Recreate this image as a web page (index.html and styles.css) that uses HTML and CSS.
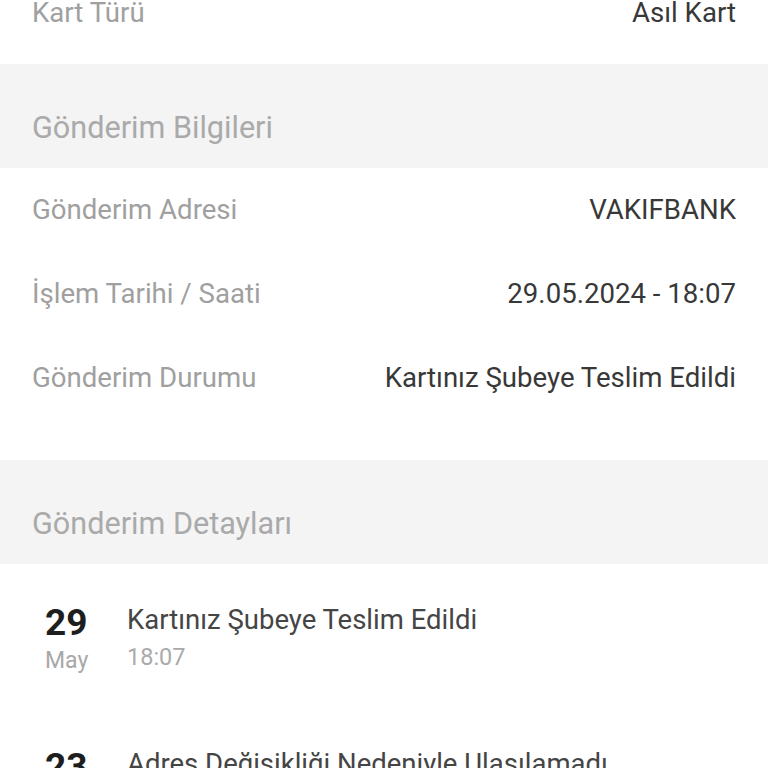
FILE: index.html
```html
<!DOCTYPE html>
<html lang="tr">
<head>
<meta charset="utf-8">
<link rel="stylesheet" href="styles.css">
</head>
<body>
<div class="page">
  <div class="row row-top">
    <span class="label">Kart Türü</span>
    <span class="value">Asıl Kart</span>
  </div>
  <div class="section">Gönderim Bilgileri</div>
  <div class="rows">
    <div class="row">
      <span class="label">Gönderim Adresi</span>
      <span class="value">VAKIFBANK</span>
    </div>
    <div class="row">
      <span class="label">İşlem Tarihi / Saati</span>
      <span class="value">29.05.2024 - 18:07</span>
    </div>
    <div class="row">
      <span class="label">Gönderim Durumu</span>
      <span class="value">Kartınız Şubeye Teslim Edildi</span>
    </div>
  </div>
  <div class="section">Gönderim Detayları</div>
  <div class="timeline">
    <div class="event">
      <div class="date">
        <div class="day">29</div>
        <div class="month">May</div>
      </div>
      <div class="info">
        <div class="title">Kartınız Şubeye Teslim Edildi</div>
        <div class="time">18:07</div>
      </div>
    </div>
    <div class="event">
      <div class="date">
        <div class="day">23</div>
        <div class="month">May</div>
      </div>
      <div class="info">
        <div class="title">Adres Değişikliği Nedeniyle Ulaşılamadı</div>
        <div class="time">10:12</div>
      </div>
    </div>
  </div>
</div>
</body>
</html>
```
FILE: styles.css
```css
html, body {
  margin: 0;
  padding: 0;
  background: #ffffff;
  overflow: hidden;
}
.page {
  font-family: Roboto, "Noto Sans", sans-serif;
  width: 768px;
  height: 768px;
  overflow: hidden;
}
.row {
  display: flex;
  justify-content: space-between;
  align-items: center;
  height: 84px;
  padding: 0 32px;
  box-sizing: border-box;
  font-size: 27.6px;
  line-height: 32px;
}
.row-top {
  height: 64px;
  align-items: flex-end;
  padding-bottom: 35px;
}
.label {
  color: #a0a0a0;
}
.value {
  color: #383838;
}
.rows {
  padding: 0 0 40px;
}
.section {
  background: #f4f4f4;
  height: 104px;
  box-sizing: border-box;
  padding: 47px 32px 0;
  font-size: 30.6px;
  line-height: 34px;
  color: #aaaaaa;
}
.timeline {
  padding: 39px 32px 0;
}
.event {
  display: flex;
  height: 144px;
}
.date {
  width: 95px;
  display: flex;
  flex-direction: column;
  align-items: flex-start;
  padding-left: 13px;
  box-sizing: border-box;
}
.day {
  font-size: 37px;
  font-weight: 700;
  color: #1e1e1e;
  line-height: 40px;
}
.month {
  font-size: 23px;
  color: #a8a8a8;
  line-height: 36px;
}
.info {
  display: flex;
  flex-direction: column;
}
.title {
  font-size: 27.5px;
  color: #454545;
  line-height: 34px;
}
.time {
  font-size: 23.5px;
  color: #aaaaaa;
  line-height: 40px;
}
```
